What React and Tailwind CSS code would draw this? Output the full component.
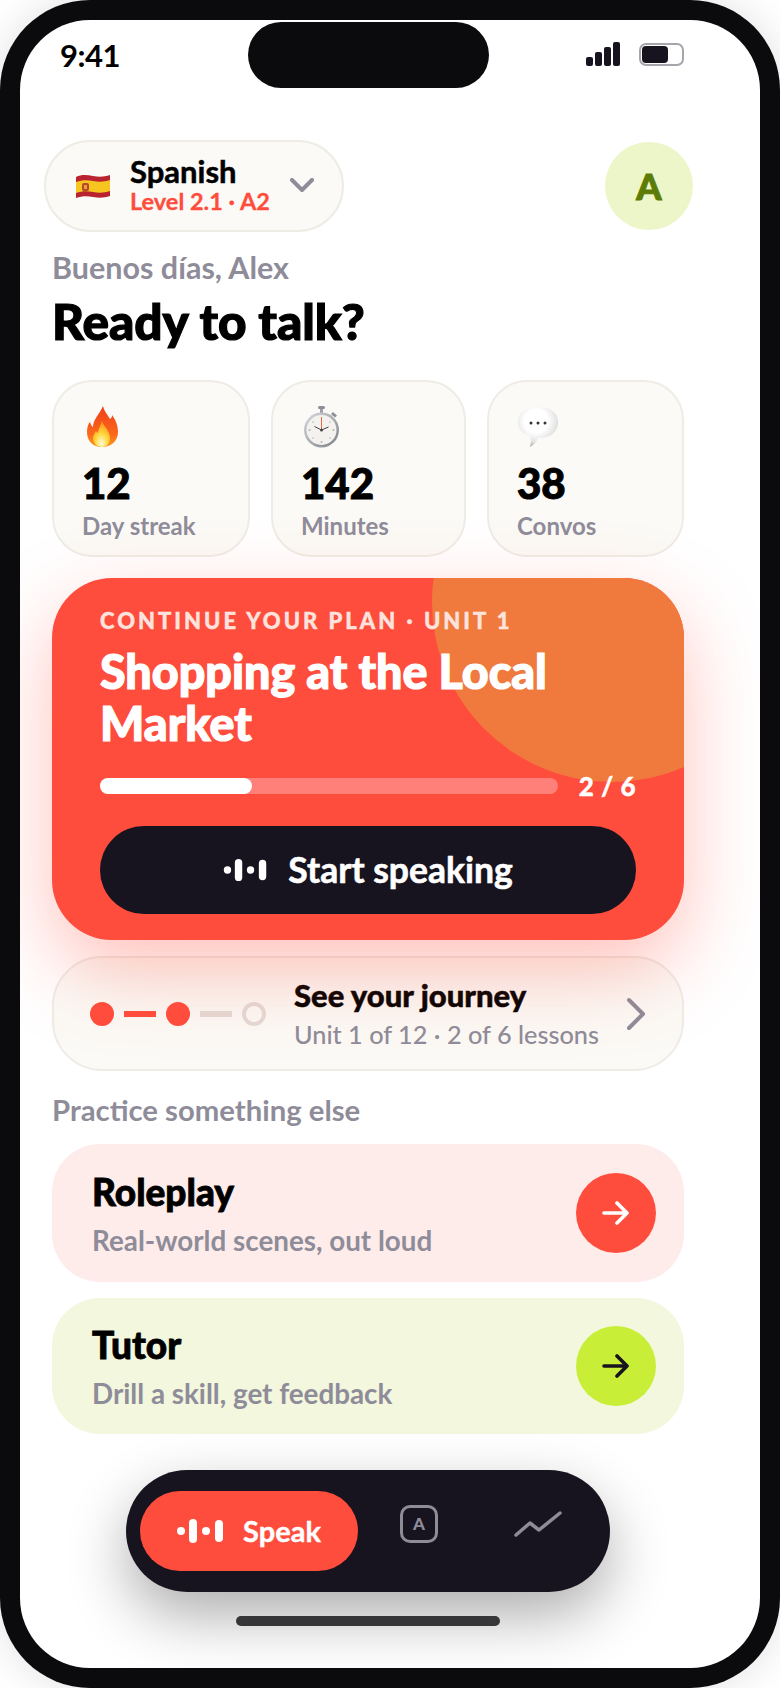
import React from "react";

const Bars = ({ className }) => (
  <svg className={className} viewBox="0 0 46 26" fill="white">
    <circle cx="4" cy="13" r="4" />
    <rect x="12" y="1" width="8" height="24" rx="4" />
    <circle cx="29" cy="13" r="4" />
    <rect x="38" y="2" width="8" height="22" rx="4" />
  </svg>
);

const Arrow = ({ color }) => (
  <svg className="w-[28px] h-[24px]" viewBox="0 0 28 24" fill="none" stroke={color} strokeWidth="3.6" strokeLinecap="round" strokeLinejoin="round">
    <path d="M2 12h23M15 2l10 10-10 10" />
  </svg>
);

const Flag = () => (
  <svg className="w-[36px] h-[28px]" viewBox="0 0 36 28">
    <path d="M1 5c6-3 11-2 17-1s11 1 17-1v21c-6 2-11 2-17 1s-11-1-17 1z" fill="#b8232f" />
    <path d="M1 10c6-2 11-2 17-1s11 1 17-1v11c-6 2-11 2-17 1s-11-1-17 1z" fill="#f6c51f" />
    <rect x="7" y="11" width="7" height="8" rx="2" fill="#b5472d" />
    <rect x="9" y="13" width="3" height="4" fill="#e9a23b" />
  </svg>
);

const Flame = () => (
  <svg className="ml-[3px] w-[34px] h-[42px]" viewBox="0 0 34 42">
    <defs>
      <linearGradient id="fl" x1="0" y1="0" x2="0" y2="1">
        <stop offset="0" stopColor="#ef3d1c" />
        <stop offset="0.7" stopColor="#fb6a1a" />
        <stop offset="1" stopColor="#fd9a1c" />
      </linearGradient>
      <radialGradient id="fi" cx="0.5" cy="0.85" r="0.75">
        <stop offset="0" stopColor="#fffbd6" />
        <stop offset="0.5" stopColor="#ffd83c" />
        <stop offset="1" stopColor="#ff9a1c" />
      </radialGradient>
    </defs>
    <path d="M18 0c1 5 4 8 7 13 2-1 2-3 2-4 4 5 6 11 6 17 0 9-7 15-16 15S2 35 2 26c0-4 1-8 3-10 1 2 1 4 3 5 0-8 7-13 10-21z" fill="url(#fl)" />
    <path d="M17 15c1 5 8 9 8 17 0 5-3 9-8 9s-9-4-9-9c0-3 2-5 3-7 1 1 1 2 2 2 0-4 3-8 4-12z" fill="url(#fi)" />
  </svg>
);

const Watch = () => (
  <svg className="ml-[2px] w-[38px] h-[42px]" viewBox="0 0 38 42">
    <defs>
      <linearGradient id="wr" x1="0" y1="0" x2="1" y2="1">
        <stop offset="0" stopColor="#d8dade" />
        <stop offset="1" stopColor="#7b8088" />
      </linearGradient>
    </defs>
    <rect x="15" y="0" width="7" height="3" rx="1.5" fill="#8b8f96" />
    <rect x="17" y="3" width="3" height="4" fill="#9ea2a8" />
    <path d="M30 6l4 3.5-2 2-4-3.500z" fill="#8b8f96" />
    <circle cx="18.500" cy="24" r="17.500" fill="url(#wr)" />
    <circle cx="18.500" cy="24" r="15" fill="#f3f2ee" />
    <path d="M18.500 24l-7-3.500M18.500 24l7-3" stroke="#444" strokeWidth="1" />
    <path d="M18.500 11v13" stroke="#e9683c" strokeWidth="1" />
    <circle cx="18.500" cy="24" r="1.500" fill="#444" />
    <g fill="#b5b5b5">
      <circle cx="18.500" cy="36" r="1" /><circle cx="6.500" cy="24" r="1" /><circle cx="30.500" cy="24" r="1" />
      <circle cx="10" cy="16" r="0.800" /><circle cx="27" cy="16" r="0.800" /><circle cx="10" cy="32" r="0.800" /><circle cx="27" cy="32" r="0.800" />
    </g>
  </svg>
);

const Bubble = () => (
  <svg className="ml-[1px] w-[40px] h-[40px]" viewBox="0 0 40 40">
    <defs>
      <radialGradient id="bb" cx="0.45" cy="0.35" r="0.65">
        <stop offset="0.45" stopColor="#ffffff" />
        <stop offset="0.8" stopColor="#e4e4e4" />
        <stop offset="1" stopColor="#a9a9a9" />
      </radialGradient>
    </defs>
    <path d="M12 28.500C4 27 0 22 0 15 0 6 7 0 20 0s20 6 20 15-7 17-20 16c-1 4-6 8-8 9 1-3 1-7 0-11.500z" fill="url(#bb)" />
    <circle cx="13" cy="16" r="1.500" fill="#333" />
    <circle cx="20" cy="16" r="1.500" fill="#333" />
    <circle cx="27" cy="16" r="1.500" fill="#333" />
  </svg>
);

const Stat = ({ icon, value, label, w }) => (
  <div className={`${w} h-[177px] rounded-[40px] border-2 border-[#eeece5] bg-[#fbfaf6] pl-[28px] pt-[23px]`}>
    <div className="h-[44px] flex items-center">{icon}</div>
    <div className="mt-[9px] text-[42px] leading-[50px] font-black text-black [-webkit-text-stroke-width:1px]">{value}</div>
    <div className="mt-[3px] text-[24px] leading-[30px] font-bold text-[#8f8c9a]">{label}</div>
  </div>
);

const Practice = ({ bg, h, circle, color, title, sub, mt }) => (
  <div className={`${bg} ${h} ${mt} rounded-[48px] flex items-center justify-between pl-[40px] pr-[28px]`}>
    <div>
      <div className="text-[37px] leading-[46px] font-black text-black [-webkit-text-stroke-width:0.8px]">{title}</div>
      <div className="mt-[9px] text-[27.8px] leading-[34px] font-bold text-[#8f8c9a]">{sub}</div>
    </div>
    <div className={`${circle} w-[80px] h-[80px] rounded-full flex items-center justify-center`}>
      <Arrow color={color} />
    </div>
  </div>
);

export default function App() {
  return (
    <div className="w-[780px] h-[1688px] bg-white overflow-hidden" style={{ fontFamily: "Lato, 'Noto Sans', sans-serif" }}>
      <div className="w-full h-full rounded-[90px] bg-[#0b0b0d] p-[20px] shadow-[0_0_40px_rgba(0,0,0,0.12)]">
        <div className="relative w-full h-full rounded-[70px] bg-white overflow-hidden">
          <div className="absolute left-[228px] top-[2px] w-[241px] h-[66px] rounded-[33px] bg-[#0b0b0d]" />

          <div className="h-[120px] flex items-start justify-between pl-[40px] pr-[76px] pt-[19px]">
            <div className="text-[31px] leading-[32px] font-bold text-black tracking-[-0.5px]">9:41</div>
            <div className="flex items-center gap-[19px] pt-[3px]">
              <svg className="w-[34px] h-[24px]" viewBox="0 0 34 24" fill="#17141f">
                <rect x="0" y="15" width="7" height="9" rx="2" />
                <rect x="9" y="10" width="7" height="14" rx="2" />
                <rect x="18" y="5" width="7" height="19" rx="2" />
                <rect x="27" y="0" width="7" height="24" rx="2" />
              </svg>
              <div className="w-[45px] h-[23px] rounded-[7px] border-2 border-[#a5a5ac] p-[1px]">
                <div className="w-[26px] h-full rounded-[4px] bg-[#17141f]" />
              </div>
            </div>
          </div>

          <div className="flex items-center justify-between pl-[24px] pr-[67px]">
            <div className="w-[300px] h-[92px] rounded-[46px] border-2 border-[#eeece5] bg-[#fbfaf6] flex items-center pl-[29px]">
              <Flag />
              <div className="ml-[19px] w-[162px] -mt-[4px]">
                <div className="text-[31px] leading-[34px] font-bold text-black [-webkit-text-stroke-width:0.5px]">Spanish</div>
                <div className="text-[23.5px] leading-[26px] font-bold text-[#ff4d3d] [-webkit-text-stroke-width:0.3px]">Level 2.1 · A2</div>
              </div>
              <svg className="w-[24px] h-[15px] -ml-[2px] -mt-[2px]" viewBox="0 0 24 15" fill="none" stroke="#8f8c9a" strokeWidth="4" strokeLinecap="round" strokeLinejoin="round">
                <path d="M2 2l10 10L22 2" />
              </svg>
            </div>
            <div className="w-[88px] h-[88px] rounded-full bg-[#ecf6c8] flex items-center justify-center text-[36px] font-black text-[#5d7c05] [-webkit-text-stroke-width:1px]">A</div>
          </div>

          <div className="pl-[32px] pr-[76px]">
            <div className="mt-[17px] text-[30.5px] leading-[36px] font-bold text-[#8f8c9a]">Buenos días, Alex</div>
            <div className="mt-[6px] text-[49.5px] leading-[60px] font-black text-black [-webkit-text-stroke-width:1.2px]">Ready to talk?</div>

            <div className="mt-[29px] flex justify-between">
              <Stat w="w-[198px]" icon={<Flame />} value="12" label="Day streak" />
              <Stat w="w-[195px]" icon={<Watch />} value="142" label="Minutes" />
              <Stat w="w-[197px]" icon={<Bubble />} value="38" label="Convos" />
            </div>

            <div className="relative mt-[21px] h-[362px] rounded-[60px] bg-[#ff4d3d] overflow-hidden shadow-[0_30px_80px_rgba(255,77,61,0.35)] px-[48px] pt-[30px]">
              <div className="absolute left-[380px] -top-[156px] w-[360px] h-[360px] rounded-full bg-[#f07a3e]" />
              <div className="relative">
                <div className="text-[22px] leading-[26px] font-black text-[#fde3de] tracking-[3px] whitespace-nowrap [-webkit-text-stroke-width:0.4px]">CONTINUE YOUR PLAN · UNIT 1</div>
                <div className="mt-[11px] text-[46.6px] leading-[52px] font-black text-white w-[470px] [-webkit-text-stroke-width:1.2px]">Shopping at the Local Market</div>
                <div className="mt-[22px] flex items-center justify-between">
                  <div className="w-[458px] h-[16px] rounded-full bg-[#ff8078]">
                    <div className="w-[152px] h-full rounded-full bg-white" />
                  </div>
                  <div className="text-[26px] leading-[30px] font-black text-white tracking-[0.5px] [-webkit-text-stroke-width:0.4px]">2 / 6</div>
                </div>
                <div className="mt-[25px] h-[88px] rounded-[44px] bg-[#17141f] flex items-center justify-center gap-[21px]">
                  <Bars className="w-[44px] h-[24px]" />
                  <span className="text-[35.5px] font-bold text-white [-webkit-text-stroke-width:0.6px]">Start speaking</span>
                </div>
              </div>
            </div>

            <div className="mt-[16px] h-[115px] rounded-[50px] border-2 border-[#eeece5] bg-[#fbfaf6] flex items-center pl-[36px]">
              <div className="w-[24px] h-[24px] rounded-full bg-[#ff4d3d]" />
              <div className="ml-[10px] w-[32px] h-[6px] bg-[#ff4d3d]" />
              <div className="ml-[10px] w-[24px] h-[24px] rounded-full bg-[#ff4d3d]" />
              <div className="ml-[10px] w-[32px] h-[6px] bg-[#e4dbd5]" />
              <div className="ml-[10px] w-[24px] h-[24px] rounded-full border-4 border-[#e4dbd5]" />
              <div className="ml-[28px] w-[332px]">
                <div className="text-[31px] leading-[38px] font-black text-black [-webkit-text-stroke-width:0.5px]">See your journey</div>
                <div className="mt-[3px] text-[25.3px] leading-[34px] font-medium text-[#8f8c9a]">Unit 1 of 12 · 2 of 6 lessons</div>
              </div>
              <svg className="w-[20px] h-[34px]" viewBox="0 0 20 34" fill="none" stroke="#8f8c9a" strokeWidth="4" strokeLinecap="round" strokeLinejoin="round">
                <path d="M3 3l14 14L3 31" />
              </svg>
            </div>

            <div className="mt-[21px] text-[29.3px] leading-[36px] font-bold text-[#8f8c9a]">Practice something else</div>

            <Practice mt="mt-[16px]" bg="bg-[#feecea]" h="h-[138px]" circle="bg-[#ff4d3d]" color="#ffffff" title="Roleplay" sub="Real-world scenes, out loud" />
            <Practice mt="mt-[16px]" bg="bg-[#f2f7dd]" h="h-[136px]" circle="bg-[#c8ee37]" color="#17141f" title="Tutor" sub="Drill a skill, get feedback" />
          </div>

          <div className="absolute left-[106px] top-[1450px] w-[484px] h-[122px] rounded-[61px] bg-[#17141f] shadow-[0_24px_60px_rgba(0,0,0,0.32)] flex items-center pl-[14px]">
            <div className="w-[218px] h-[80px] rounded-[40px] bg-[#ff4d3d] flex items-center justify-center gap-[20px]">
              <Bars className="w-[46px] h-[26px]" />
              <span className="text-[29px] font-bold text-white [-webkit-text-stroke-width:0.4px]">Speak</span>
            </div>
            <div className="ml-[42px] -mt-[14px] w-[38px] h-[38px] rounded-[10px] border-[3px] border-[#8f8c9a] flex items-center justify-center text-[17px] font-black text-[#8f8c9a]">A</div>
            <svg className="ml-[76px] -mt-[14px] w-[48px] h-[26px]" viewBox="0 0 48 26" fill="none" stroke="#8f8c9a" strokeWidth="3.500" strokeLinecap="round" strokeLinejoin="round">
              <path d="M2 24l14-12 9 7L46 2" />
            </svg>
          </div>
          <div className="absolute left-[216px] top-[1596px] w-[264px] h-[10px] rounded-[5px] bg-[#363538]" />
        </div>
      </div>
    </div>
  );
}
